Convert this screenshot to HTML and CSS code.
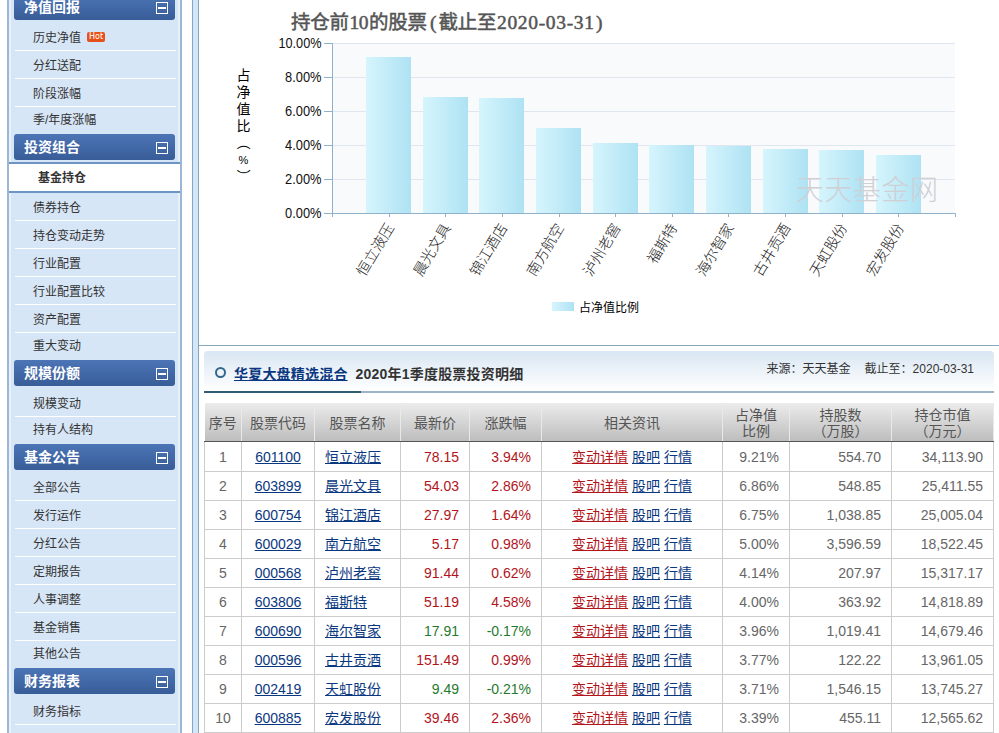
FILE: index.html
```html
<!DOCTYPE html>
<html lang="zh-CN">
<head>
    <meta charset="UTF-8">
    <title>基金持仓 - 华夏大盘精选混合</title>
    <link rel="stylesheet" href="styles.css">
</head>
<body>
    <div class="page">
        <div class="sidebar">
            <h3>净值回报<i class="toggle"></i></h3>
            <ul>
                <li>历史净值<span class="hot">Hot</span></li>
                <li>分红送配</li>
                <li>阶段涨幅</li>
                <li>季/年度涨幅</li>
            </ul>
            <h3>投资组合<i class="toggle"></i></h3>
            <ul>
                <li class="active">基金持仓</li>
                <li>债券持仓</li>
                <li>持仓变动走势</li>
                <li>行业配置</li>
                <li>行业配置比较</li>
                <li>资产配置</li>
                <li>重大变动</li>
            </ul>
            <h3>规模份额<i class="toggle"></i></h3>
            <ul>
                <li>规模变动</li>
                <li>持有人结构</li>
            </ul>
            <h3>基金公告<i class="toggle"></i></h3>
            <ul>
                <li>全部公告</li>
                <li>发行运作</li>
                <li>分红公告</li>
                <li>定期报告</li>
                <li>人事调整</li>
                <li>基金销售</li>
                <li>其他公告</li>
            </ul>
            <h3>财务报表<i class="toggle"></i></h3>
            <ul>
                <li>财务指标</li>
                <li></li>
            </ul>
        </div>
        <div class="splitter"></div>
        <div class="main">
            <div class="chart">
                <svg id="chart" width="800" height="345" viewBox="199 0 800 345"></svg>
            </div>
            <div class="box">
                <div class="box-title">
                    <i class="ring"></i>
                    <h4><a href="#">华夏大盘精选混合</a><span>2020年1季度股票投资明细</span></h4>
                    <div class="source"><span>来源：天天基金</span><span>截止至：2020-03-31</span></div>
                </div>
                <table>
                    <colgroup>
                        <col class="c-no"><col class="c-code"><col class="c-name"><col class="c-price"><col class="c-rate">
                        <col class="c-info"><col class="c-ratio"><col class="c-count"><col class="c-value">
                    </colgroup>
                    <thead>
                        <tr>
                            <th>序号</th>
                            <th>股票代码</th>
                            <th>股票名称</th>
                            <th>最新价</th>
                            <th>涨跌幅</th>
                            <th>相关资讯</th>
                            <th>占净值<br>比例</th>
                            <th>持股数<br>（万股）</th>
                            <th>持仓市值<br>（万元）</th>
                        </tr>
                    </thead>
                    <tbody id="stocks"></tbody>
                </table>
            </div>
        </div>
    </div>

    <script>
        // 代码, 名称, 最新价, 涨跌幅, 占净值比例, 持股数, 持仓市值
        const stocks = [
            ["601100", "恒立液压", "78.15", 3.94, 9.21, "554.70", "34,113.90"],
            ["603899", "晨光文具", "54.03", 2.86, 6.86, "548.85", "25,411.55"],
            ["600754", "锦江酒店", "27.97", 1.64, 6.75, "1,038.85", "25,005.04"],
            ["600029", "南方航空", "5.17", 0.98, 5.00, "3,596.59", "18,522.45"],
            ["000568", "泸州老窖", "91.44", 0.62, 4.14, "207.97", "15,317.17"],
            ["603806", "福斯特", "51.19", 4.58, 4.00, "363.92", "14,818.89"],
            ["600690", "海尔智家", "17.91", -0.17, 3.96, "1,019.41", "14,679.46"],
            ["000596", "古井贡酒", "151.49", 0.99, 3.77, "122.22", "13,961.05"],
            ["002419", "天虹股份", "9.49", -0.21, 3.71, "1,546.15", "13,745.27"],
            ["600885", "宏发股份", "39.46", 2.36, 3.39, "455.11", "12,565.62"]
        ];

        function drawTable() {
            let html = "";
            stocks.forEach((s, i) => {
                const cls = s[3] < 0 ? "num down" : "num up";
                html += `<tr>
                    <td>${i + 1}</td>
                    <td><a href="#">${s[0]}</a></td>
                    <td class="name"><a href="#">${s[1]}</a></td>
                    <td class="${cls}">${s[2]}</td>
                    <td class="${cls}">${s[3].toFixed(2)}%</td>
                    <td><a class="red" href="#">变动详情</a> <a href="#">股吧</a> <a href="#">行情</a></td>
                    <td class="num">${s[4].toFixed(2)}%</td>
                    <td class="num">${s[5]}</td>
                    <td class="num">${s[6]}</td>
                </tr>`;
            });
            document.getElementById("stocks").innerHTML = html;
        }

        function drawChart() {
            const left = 332, right = 955, top = 43, bottom = 213;
            const step = (right - left) / 11;
            const unit = (bottom - top) / 10;

            let svg = `<defs><linearGradient id="bar">
                <stop offset="0" stop-color="#d6f5fd"/><stop offset="1" stop-color="#aee2f3"/>
            </linearGradient></defs>`;

            // 标题
            svg += `<text class="title" y="29">
                <tspan x="291" textLength="58">持仓前</tspan><tspan x="349.5" textLength="19">10</tspan><tspan x="369" textLength="58">的股票</tspan><tspan x="430">(</tspan><tspan x="438.5" textLength="58">截止至</tspan><tspan x="497" textLength="97">2020-03-31</tspan><tspan x="596">)</tspan>
            </text>`;

            // 纵轴名称
            ["占", "净", "值", "比"].forEach((c, i) => {
                svg += `<text class="axis-name" x="243.5" y="${80 + i * 17}">${c}</text>`;
            });
            svg += `<text class="axis-name" transform="translate(239 143) rotate(90)">（</text>
                <text class="axis-name percent" x="243.5" y="164">%</text>
                <text class="axis-name" transform="translate(239 176) rotate(90)">）</text>`;

            // 网格和刻度
            svg += `<rect class="plot" x="${left}" y="${top}" width="${right - left}" height="${bottom - top}"/>`;
            for (let v = 0; v <= 10; v += 2) {
                const y = bottom - v * unit;
                svg += `<path class="grid" d="M${left} ${y + 0.5}H${right}"/>
                    <path class="axis" d="M324 ${y + 0.5}H${left}"/>
                    <text class="tick" x="${v === 10 ? 278.5 : 285}" y="${y + 5}" textLength="${v === 10 ? 43 : 36.5}" lengthAdjust="spacingAndGlyphs">${v.toFixed(2)}%</text>`;
            }

            stocks.forEach((s, i) => {
                const x = left + step * (i + 1);
                const h = Math.round(s[4] * unit - 0.125);
                svg += `<rect fill="url(#bar)" x="${Math.round(x - 22.5)}" y="${bottom - h}" width="45" height="${h}"/>
                    <path class="axis" d="M${Math.round(x) + 0.5} ${bottom}v4"/>
                    <text class="label" transform="translate(${x + 6} 227.5) rotate(-59)">${s[1]}</text>`;
            });
            svg += `<path class="axis" d="M${left + 0.5} ${top}V217M${left} ${bottom + 0.5}H${right + 0.5}V217"/>`;

            // 图例和水印
            svg += `<rect fill="url(#bar)" x="552" y="302" width="22" height="9"/>
                <text class="legend" x="579" y="312">占净值比例</text>
                <text class="watermark" x="796" y="200" textLength="142">天天基金网</text>`;
            document.getElementById("chart").innerHTML = svg;
        }

        drawTable();
        drawChart();
    </script>
</body>
</html>
```
FILE: styles.css
```css
body {
    margin: 0;
    overflow: hidden;
    background: #fff;
    color: #333;
    font: 12px "Liberation Sans", "Noto Sans CJK SC", sans-serif;
}
h3, h4, ul {
    margin: 0;
    padding: 0;
}
a {
    color: #0a3880;
    text-decoration: underline;
    text-underline-offset: 1px;
    text-decoration-thickness: 1px;
}
.page {
    display: flex;
    height: 733px;
    overflow: hidden;
}

/* 左侧菜单 */
.sidebar {
    box-sizing: border-box;
    width: 175px;
    height: 760px;
    margin: -6px 10px 0 7px;
    background: #d7e6f6;
    border: solid #9ab8d6;
    border-width: 0 2px;
    box-shadow: inset 2px 0 #e8f1fa, inset -2px 0 #e8f1fa;
}
.sidebar h3 {
    display: flex;
    justify-content: space-between;
    height: 26px;
    margin: 0 5px 3px;
    padding: 0 7px 0 10px;
    border-radius: 3px;
    background: linear-gradient(#4c75b6, #385d98);
    color: #fff;
    font-size: 14px;
    line-height: 26px;
}
.toggle {
    box-sizing: border-box;
    width: 12px;
    height: 12px;
    margin-top: 8px;
    border: 1px solid #fff;
}
.toggle::after {
    content: "";
    display: block;
    height: 2px;
    margin: 4px 1px;
    background: #fff;
}
.sidebar ul {
    margin-bottom: 3px;
    list-style: none;
}
.sidebar li {
    height: 27px;
    margin: 0 4px 0 6px;
    padding-left: 18px;
    border-bottom: 1px solid #fff;
    line-height: 30px;
}
.sidebar li:last-child {
    height: 24px;
    border-bottom: 0;
    line-height: 26px;
}
.sidebar li.active {
    height: 27px;
    margin: -1px 0 0;
    padding-left: 29px;
    border: solid #6c94c4;
    border-width: 2px 0;
    background: #fff;
    font-weight: bold;
    line-height: 28px;
}
.hot {
    display: inline-block;
    width: 18px;
    height: 10px;
    margin-left: 6px;
    border-radius: 2px;
    background: #e4521b;
    color: #fff;
    font: 8px/10px "DejaVu Sans", sans-serif;
    text-align: center;
    vertical-align: 3px;
}
.splitter {
    box-sizing: border-box;
    width: 7px;
    background: #d7e6f6;
    border: solid #7ea8c4;
    border-width: 0 1px;
}

/* 右侧内容 */
.main {
    width: 800px;
}
.chart {
    height: 345px;
    border-bottom: 1px solid #86a9c0;
}
.chart svg {
    display: block;
}
.title {
    fill: #555;
    font: 19.5px "Liberation Serif", "Noto Sans CJK SC", serif;
    stroke: #555;
    stroke-width: 0.5px;
}
.axis-name {
    fill: #000;
    font-size: 14px;
    text-anchor: middle;
}
.axis-name.percent {
    font-size: 11px;
}
.plot {
    fill: #f9fafc;
}
.grid {
    stroke: #dfe6f0;
}
.axis {
    fill: none;
    stroke: #8fb2ca;
}
.tick {
    fill: #111;
    font-size: 14px;
}
.label {
    fill: #222;
    font-size: 14.5px;
    font-weight: 300;
    text-anchor: end;
}
.legend {
    fill: #000;
    font-size: 12px;
}
.watermark {
    fill: #cfcfd4;
    font-size: 28px;
    font-weight: 300;
}

.box {
    width: 790px;
    margin: 5px 0 0 5px;
}
.box-title {
    position: relative;
    display: flex;
    align-items: center;
    height: 40px;
    margin-bottom: 10px;
    border-bottom: 2px solid #9bb5c9;
    border-radius: 4px 4px 0 0;
    background: linear-gradient(#d9e6f3, #fff);
}
.box-title::after {
    content: "";
    position: absolute;
    left: 0;
    bottom: -2px;
    width: 157px;
    height: 2px;
    background: #2f5b75;
}
.ring {
    width: 7px;
    height: 7px;
    margin: 2px 8px 0 11px;
    border: 2px solid #33688a;
    border-radius: 50%;
}
h4 {
    padding-top: 4px;
    font-size: 14px;
    letter-spacing: 0.2px;
}
h4 span {
    margin-left: 8px;
}
.source {
    display: flex;
    gap: 14px;
    margin: -7px 20px 0 auto;
}

table {
    width: 790px;
    border-collapse: collapse;
    table-layout: fixed;
    color: #666;
    font-size: 14px;
}
.c-no { width: 37px; }
.c-code { width: 73px; }
.c-name { width: 86px; }
.c-price { width: 69px; }
.c-rate { width: 72px; }
.c-info { width: 181px; }
.c-ratio { width: 67px; }
.c-count { width: 102px; }
.c-value { width: 102px; }
thead tr {
    background: linear-gradient(#ececec, #bcbcbc);
}
th {
    height: 37px;
    padding: 1px 0 0;
    border-right: 1px solid #e9e9e9;
    border-bottom: 1px solid #555;
    color: #555;
    font-weight: normal;
    line-height: 16px;
}
td {
    height: 28px;
    padding: 0;
    border: 1px solid #ccc;
    line-height: 28px;
    text-align: center;
    white-space: nowrap;
}
tbody tr:first-child td {
    height: 28px;
    padding-top: 1px;
    border-top-color: #555;
}
td.name {
    padding-left: 10px;
    text-align: left;
}
td.num {
    padding-right: 10px;
    text-align: right;
}
td.up, a.red {
    color: #b2141c;
}
td.down {
    color: #1f7a2e;
}
```
